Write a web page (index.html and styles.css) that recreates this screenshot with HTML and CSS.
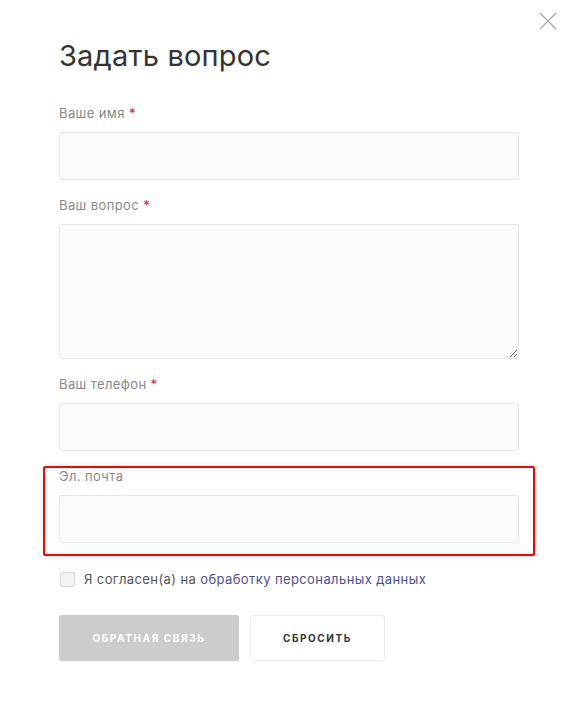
FILE: index.html
```html
<!DOCTYPE html>
<html lang="ru">
<head>
<meta charset="utf-8">
<title>Задать вопрос</title>
<link rel="stylesheet" href="styles.css">
</head>
<body>
<div class="modal">
  <button class="close" type="button" aria-label="Закрыть">
    <svg width="18" height="18" viewBox="0 0 18 18"><path d="M1 1L17 17M17 1L1 17" stroke="#a8a8a8" stroke-width="1.2" fill="none"/></svg>
  </button>
  <h1 class="title">Задать вопрос</h1>
  <form class="form">
    <div class="group">
      <label class="label">Ваше имя <span class="req">*</span></label>
      <input class="field" type="text">
    </div>
    <div class="group">
      <label class="label">Ваш вопрос <span class="req">*</span></label>
      <textarea class="field area"></textarea>
    </div>
    <div class="group">
      <label class="label">Ваш телефон <span class="req">*</span></label>
      <input class="field" type="text">
    </div>
    <div class="group highlight">
      <label class="label">Эл. почта</label>
      <input class="field" type="text">
    </div>
    <div class="agree">
      <span class="check"></span>
      <span class="agree-text">Я согласен(а) на <a class="link" href="#">обработку персональных данных</a></span>
    </div>
    <div class="buttons">
      <button class="btn btn-primary" type="button">ОБРАТНАЯ СВЯЗЬ</button>
      <button class="btn btn-reset" type="button">СБРОСИТЬ</button>
    </div>
  </form>
</div>
</body>
</html>
```
FILE: styles.css
```css
* { box-sizing: border-box; }
html, body { margin: 0; padding: 0; background: #fff; }
body { font-family: Inter, "Open Sans", sans-serif; color: #333; }
.modal { position: relative; padding: 36px 56px 40px 59px; }
.close { position: absolute; top: 12px; right: 18px; width: 18px; height: 18px; padding: 0; border: 0; background: none; cursor: pointer; }
.close svg { display: block; }
.title { margin: 0 0 28px; font-size: 29px; font-weight: 400; line-height: 40px; color: #333; letter-spacing: 0.2px; }
.form { display: flex; flex-direction: column; }
.group { display: flex; flex-direction: column; margin-bottom: 16px; }
.label { font-size: 13px; line-height: 18px; color: #888; margin-bottom: 10px; letter-spacing: 0.4px; }
.req { color: #e02020; }
.field { display: block; width: 100%; height: 48px; background: #f9fafc; border: 1px solid #e6e7ea; border-radius: 3px; font: inherit; outline: none; }
.area { height: 135px; resize: vertical; }
.highlight { margin: -1px -16px 15px; padding: 0 14px 11px; border: 2px solid #ff0000; border-radius: 2px; box-shadow: 0 0 8px rgba(0,0,0,0.08); }
.highlight .label { margin-top: -1px; }
.agree { display: flex; align-items: center; gap: 9px; margin: 0 0 28px 1px; height: 16px; }
.check { width: 15px; height: 15px; border: 1px solid #d8d8d8; border-radius: 2px; background: #f4f4f4; }
.agree-text { font-size: 13px; color: #555; letter-spacing: 0.4px; }
.link { color: #4b4f9c; text-decoration: none; }
.buttons { display: flex; gap: 11px; }
.btn { height: 46px; border-radius: 3px; font-family: inherit; font-size: 10px; font-weight: 700; letter-spacing: 1.6px; cursor: pointer; }
.btn-primary { width: 180px; background: #cccccc; border: 0; color: #fff; }
.btn-reset { width: 135px; background: #fff; border: 1px solid #eeeeee; color: #333; }
```
